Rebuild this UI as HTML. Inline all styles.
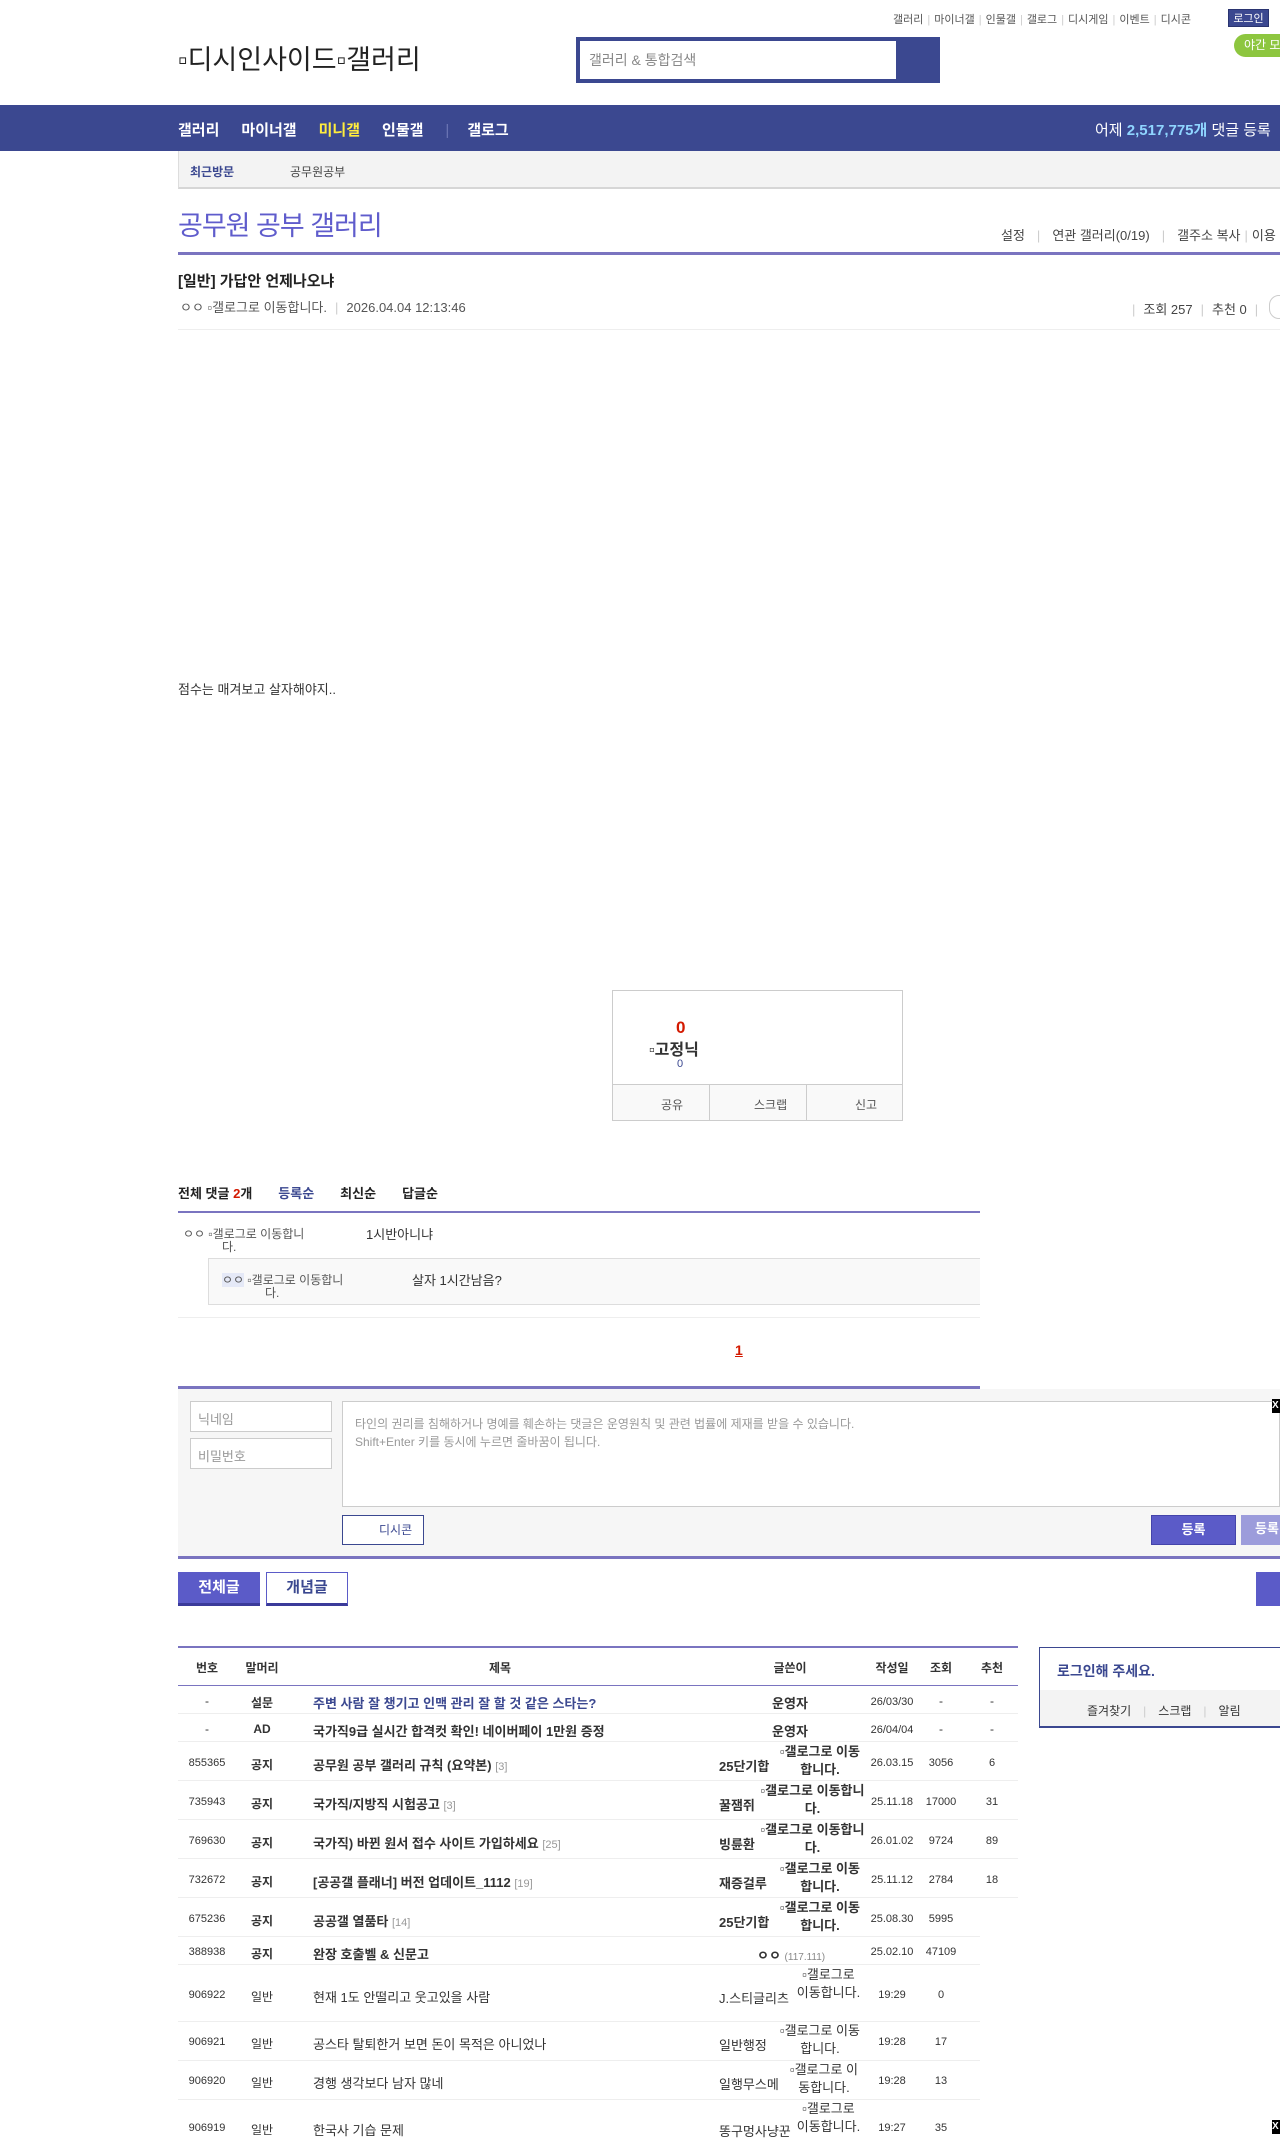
<!DOCTYPE html>
<html><head><meta charset="utf-8"><style>
*{margin:0;padding:0;box-sizing:border-box}
body{width:1280px;height:2134px;overflow:hidden;position:relative;background:#fff;font-family:"Liberation Sans","Noto Sans CJK KR",sans-serif;color:#333;font-size:13px}
.a{position:absolute;white-space:nowrap}
.navy{background:#3b4890}
.sep{color:#ccc;margin:0 4px}
.tl{font-size:11px;color:#555}
.c{position:absolute;text-align:center;font-size:12px}
.s{padding-top:1px}
</style></head><body>
<div class="a tl" style="left:893px;top:11px">갤러리<span class="sep">|</span>마이너갤<span class="sep">|</span>인물갤<span class="sep">|</span>갤로그<span class="sep">|</span>디시게임<span class="sep">|</span>이벤트<span class="sep">|</span>디시콘</div>
<div class="a navy" style="left:1228px;top:9px;width:41px;height:18px;color:#fff;font-size:11px;text-align:center;line-height:18px;border:1px solid #2a3470">로그인</div>
<div class="a" style="left:1234px;top:34px;width:60px;height:23px;background:#8dc63f;border-radius:12px;color:#fff;font-size:12px;line-height:23px;padding-left:10px">야간 모드</div>
<div class="a" style="left:178px;top:38px;font-size:27px;color:#222">▫디시인사이드▫갤러리</div>
<div class="a navy" style="left:576px;top:37px;width:364px;height:46px"></div>
<div class="a" style="left:580px;top:41px;width:316px;height:38px;background:#fff;font-size:14px;color:#888;line-height:38px;padding-left:9px">갤러리 &amp; 통합검색</div>
<div class="a navy" style="left:0;top:105px;width:1280px;height:46px"></div>
<div class="a" style="left:178px;top:119px;font-size:15px;font-weight:bold;color:#fff">갤러리<span style="margin-left:22px">마이너갤</span><span style="margin-left:22px;color:#ffec3d">미니갤</span><span style="margin-left:22px">인물갤</span><span style="margin-left:22px;color:#6b75b4;font-weight:normal">|</span><span style="margin-left:18px">갤로그</span></div>
<div class="a" style="left:1095px;top:119px;font-size:15px;color:#fff">어제 <b style="color:#8fd5ff">2,517,775개</b> 댓글 등록</div>
<div class="a" style="left:178px;top:151px;width:1102px;height:38px;background:#f3f3f3;border-left:1px solid #ddd;border-bottom:2px solid #d6d6d6"></div>
<div class="a" style="left:190px;top:163px;font-size:12px;font-weight:bold;color:#3b4890">최근방문</div>
<div class="a" style="left:290px;top:163px;font-size:12px;color:#444">공무원공부</div>
<div class="a" style="left:178px;top:204px;font-size:27px;color:#5f5ccc;letter-spacing:-1px">공무원 공부 갤러리</div>
<div class="a" style="left:1001px;top:225px;font-size:13px;color:#444">설정<span class="sep" style="margin:0 12px">|</span>연관 갤러리(0/19)<span class="sep" style="margin:0 12px">|</span>갤주소 복사<span class="sep">|</span>이용</div>
<div class="a" style="left:178px;top:252px;width:1102px;height:3px;background:#7a74c0"></div>
<div class="a" style="left:178px;top:270px;font-size:15px;font-weight:bold;color:#222">[일반] 가답안 언제나오냐</div>
<div class="a" style="left:180px;top:297px;font-size:13px;color:#555">ㅇㅇ ▫갤로그로 이동합니다.<span class="sep" style="margin:0 8px">|</span>2026.04.04 12:13:46</div>
<div class="a" style="left:1128px;top:299px;font-size:13px;color:#444"><span class="sep" style="margin-right:8px">|</span>조회 257<span class="sep" style="margin:0 8px">|</span>추천 0<span class="sep" style="margin:0 8px">|</span></div>
<div class="a" style="left:1269px;top:295px;width:20px;height:24px;border:1px solid #ccc;border-radius:12px"></div>
<div class="a" style="left:178px;top:329px;width:1102px;height:1px;background:#eee"></div>
<div class="a" style="left:178px;top:679px;font-size:13px;color:#333">점수는 매겨보고 살자해야지..</div>
<div class="a" style="left:612px;top:990px;width:291px;height:131px;border:1px solid #ccc"></div>
<div class="a" style="left:613px;top:1084px;width:289px;height:36px;background:#f9f9f9;border-top:1px solid #ccc"></div>
<div class="a" style="left:709px;top:1085px;width:1px;height:35px;background:#ccc"></div>
<div class="a" style="left:806px;top:1085px;width:1px;height:35px;background:#ccc"></div>
<div class="a" style="left:676px;top:1018px;font-size:17px;font-weight:bold;color:#d31900">0</div>
<div class="a" style="left:649px;top:1036px;font-size:16px;font-weight:bold;color:#333">▫고정닉</div>
<div class="a" style="left:677px;top:1058px;font-size:11px;color:#3b4890">0</div>
<div class="a" style="left:661px;top:1096px;font-size:12px;color:#555">공유</div>
<div class="a" style="left:754px;top:1096px;font-size:12px;color:#555">스크랩</div>
<div class="a" style="left:855px;top:1096px;font-size:12px;color:#555">신고</div>
<div class="a" style="left:178px;top:1183px;font-size:13px;font-weight:bold;color:#222">전체 댓글 <span style="color:#d31900">2</span>개<span style="margin-left:26px;color:#3b4890">등록순</span><span style="margin-left:26px">최신순</span><span style="margin-left:26px">답글순</span></div>
<div class="a" style="left:178px;top:1211px;width:802px;height:2px;background:#7a74c0"></div>
<div class="a" style="left:183px;top:1225px;font-size:12px;color:#555">ㅇㅇ ▫갤로그로 이동합니</div>
<div class="a" style="left:222px;top:1238px;font-size:12px;color:#555">다.</div>
<div class="a" style="left:366px;top:1224px;font-size:13px;color:#333">1시반아니냐</div>
<div class="a" style="left:208px;top:1258px;width:772px;height:47px;background:#f9f9f9;border:1px solid #ddd;border-right:none"></div>
<div class="a" style="left:222px;top:1271px;font-size:12px;color:#555"><span style="background:#e5e9f7">ㅇㅇ</span> ▫갤로그로 이동합니</div>
<div class="a" style="left:265px;top:1284px;font-size:12px;color:#555">다.</div>
<div class="a" style="left:412px;top:1270px;font-size:13px;color:#333">살자 1시간남음?</div>
<div class="a" style="left:178px;top:1317px;width:802px;height:1px;background:#eee"></div>
<div class="a" style="left:735px;top:1342px;font-size:14px;font-weight:bold;color:#d31900;text-decoration:underline">1</div>
<div class="a" style="left:178px;top:1386px;width:802px;height:3px;background:#7a74c0"></div>
<div class="a" style="left:178px;top:1389px;width:1102px;height:168px;background:#f6f6f6"></div>
<div class="a" style="left:190px;top:1401px;width:142px;height:31px;background:#fff;border:1px solid #ccc;font-size:13px;color:#999;padding:7px 7px">닉네임</div>
<div class="a" style="left:190px;top:1438px;width:142px;height:31px;background:#fff;border:1px solid #ccc;font-size:13px;color:#999;padding:7px 7px">비밀번호</div>
<div class="a" style="left:342px;top:1401px;width:938px;height:106px;background:#fff;border:1px solid #ccc;font-size:12px;color:#999;padding:13px 12px;line-height:18px;white-space:normal">타인의 권리를 침해하거나 명예를 훼손하는 댓글은 운영원칙 및 관련 법률에 제재를 받을 수 있습니다.<br>Shift+Enter 키를 동시에 누르면 줄바꿈이 됩니다.</div>
<div class="a" style="left:342px;top:1515px;width:82px;height:30px;background:#fff;border:1px solid #3b4890;font-size:12px;color:#3b4890;line-height:28px;padding-left:36px">디시콘</div>
<div class="a" style="left:1151px;top:1515px;width:85px;height:30px;background:#5b5bc8;border:1px solid #4444aa;color:#fff;font-size:13px;font-weight:bold;text-align:center;line-height:28px">등록</div>
<div class="a" style="left:1241px;top:1515px;width:50px;height:30px;background:#9c9cdb;color:#fff;font-size:13px;font-weight:bold;line-height:28px;padding-left:14px">등록</div>
<div class="a" style="left:1272px;top:1399px;width:8px;height:14px;background:#000;color:#fff;font-size:10px;font-weight:bold;line-height:14px">X</div>
<div class="a" style="left:178px;top:1556px;width:1102px;height:3px;background:#7a74c0"></div>
<div class="a" style="left:178px;top:1572px;width:82px;height:34px;background:#5b5bc8;border-bottom:3px solid #3b3b9a;color:#fff;font-size:15px;font-weight:bold;text-align:center;line-height:32px">전체글</div>
<div class="a" style="left:266px;top:1572px;width:82px;height:34px;background:#fff;border:1px solid #5b5bc8;border-bottom:3px solid #3b3b9a;color:#3b4890;font-size:15px;font-weight:bold;text-align:center;line-height:30px">개념글</div>
<div class="a" style="left:1256px;top:1572px;width:30px;height:34px;background:#5b5bc8"></div>
<div class="a" style="left:178px;top:1646px;width:840px;height:2px;background:#7a74c0"></div>
<div class="a" style="left:178px;top:1685px;width:840px;height:1px;background:#7a74c0"></div>
<div class="c" style="left:187px;top:1659px;width:40px;font-weight:bold">번호</div>
<div class="c" style="left:242px;top:1659px;width:40px;font-weight:bold">말머리</div>
<div class="c" style="left:480px;top:1659px;width:40px;font-weight:bold">제목</div>
<div class="c" style="left:765px;top:1659px;width:50px;font-weight:bold">글쓴이</div>
<div class="c" style="left:867px;top:1659px;width:50px;font-weight:bold">작성일</div>
<div class="c" style="left:921px;top:1659px;width:40px;font-weight:bold">조회</div>
<div class="c" style="left:972px;top:1659px;width:40px;font-weight:bold">추천</div>
<div class="a" style="left:178px;top:1713px;width:840px;height:1px;background:#eee"></div>
<div class="a" style="left:178px;top:1741px;width:840px;height:1px;background:#eee"></div>
<div class="a" style="left:178px;top:1780px;width:840px;height:1px;background:#eee"></div>
<div class="a" style="left:178px;top:1819px;width:840px;height:1px;background:#eee"></div>
<div class="a" style="left:178px;top:1858px;width:840px;height:1px;background:#eee"></div>
<div class="a" style="left:178px;top:1897px;width:840px;height:1px;background:#eee"></div>
<div class="a" style="left:178px;top:1936px;width:802px;height:1px;background:#eee"></div>
<div class="a" style="left:178px;top:1964px;width:802px;height:1px;background:#eee"></div>
<div class="a" style="left:178px;top:2021px;width:802px;height:1px;background:#eee"></div>
<div class="a" style="left:178px;top:2060px;width:802px;height:1px;background:#eee"></div>
<div class="a" style="left:178px;top:2099px;width:802px;height:1px;background:#eee"></div>

<div class="c" style="left:187px;top:1694px;width:40px">-</div><div class="c" style="left:242px;top:1694px;width:40px;font-weight:bold">설문</div><div class="a" style="left:313px;top:1693px;font-size:13px;font-weight:bold;color:#3b4890">주변 사람 잘 챙기고 인맥 관리 잘 할 것 같은 스타는?</div><div class="c" style="left:760px;top:1693px;width:60px;font-weight:bold;font-size:13px">운영자</div><div class="c" style="left:867px;top:1696px;width:50px;font-size:11px">26/03/30</div><div class="c" style="left:921px;top:1694px;width:40px">-</div><div class="c" style="left:972px;top:1694px;width:40px">-</div>

<div class="c" style="left:187px;top:1722px;width:40px">-</div><div class="c" style="left:242px;top:1722px;width:40px;font-weight:bold">AD</div><div class="a" style="left:313px;top:1721px;font-size:13px;font-weight:bold;color:#333">국가직9급 실시간 합격컷 확인! 네이버페이 1만원 증정</div><div class="c" style="left:760px;top:1721px;width:60px;font-weight:bold;font-size:13px">운영자</div><div class="c" style="left:867px;top:1724px;width:50px;font-size:11px">26/04/04</div><div class="c" style="left:921px;top:1722px;width:40px">-</div><div class="c" style="left:972px;top:1722px;width:40px">-</div>

<div class="c s" style="left:182px;top:1756px;width:50px;font-size:11px">855365</div><div class="c" style="left:242px;top:1756px;width:40px;font-weight:bold">공지</div><div class="a" style="left:313px;top:1755px;font-size:13px;font-weight:bold">공무원 공부 갤러리 규칙 (요약본) <span style="color:#999;font-weight:normal;font-size:11px">[3]</span></div><div class="a" style="left:719px;top:1756px;font-size:13px;font-weight:bold">25단기합</div><div class="a" style="left:775px;top:1743px;font-size:13px;font-weight:bold;line-height:18px;text-align:center;white-space:normal;width:90px">▫갤로그로 이동합니다.</div><div class="c s" style="left:867px;top:1756px;width:50px;font-size:11px">26.03.15</div><div class="c s" style="left:921px;top:1756px;width:40px;font-size:11px">3056</div><div class="c s" style="left:972px;top:1756px;width:40px;font-size:11px">6</div>

<div class="c s" style="left:182px;top:1795px;width:50px;font-size:11px">735943</div><div class="c" style="left:242px;top:1795px;width:40px;font-weight:bold">공지</div><div class="a" style="left:313px;top:1794px;font-size:13px;font-weight:bold">국가직/지방직 시험공고 <span style="color:#999;font-weight:normal;font-size:11px">[3]</span></div><div class="a" style="left:719px;top:1795px;font-size:13px;font-weight:bold">꿀잼쥐</div><div class="a" style="left:760px;top:1782px;font-size:13px;font-weight:bold;line-height:18px;text-align:center;white-space:normal;width:105px">▫갤로그로 이동합니다.</div><div class="c s" style="left:867px;top:1795px;width:50px;font-size:11px">25.11.18</div><div class="c s" style="left:921px;top:1795px;width:40px;font-size:11px">17000</div><div class="c s" style="left:972px;top:1795px;width:40px;font-size:11px">31</div>

<div class="c s" style="left:182px;top:1834px;width:50px;font-size:11px">769630</div><div class="c" style="left:242px;top:1834px;width:40px;font-weight:bold">공지</div><div class="a" style="left:313px;top:1833px;font-size:13px;font-weight:bold">국가직) 바뀐 원서 접수 사이트 가입하세요 <span style="color:#999;font-weight:normal;font-size:11px">[25]</span></div><div class="a" style="left:719px;top:1834px;font-size:13px;font-weight:bold">빙륜환</div><div class="a" style="left:760px;top:1821px;font-size:13px;font-weight:bold;line-height:18px;text-align:center;white-space:normal;width:105px">▫갤로그로 이동합니다.</div><div class="c s" style="left:867px;top:1834px;width:50px;font-size:11px">26.01.02</div><div class="c s" style="left:921px;top:1834px;width:40px;font-size:11px">9724</div><div class="c s" style="left:972px;top:1834px;width:40px;font-size:11px">89</div>

<div class="c s" style="left:182px;top:1873px;width:50px;font-size:11px">732672</div><div class="c" style="left:242px;top:1873px;width:40px;font-weight:bold">공지</div><div class="a" style="left:313px;top:1872px;font-size:13px;font-weight:bold">[공공갤 플래너] 버전 업데이트_1112 <span style="color:#999;font-weight:normal;font-size:11px">[19]</span></div><div class="a" style="left:719px;top:1873px;font-size:13px;font-weight:bold">재증걸루</div><div class="a" style="left:775px;top:1860px;font-size:13px;font-weight:bold;line-height:18px;text-align:center;white-space:normal;width:90px">▫갤로그로 이동합니다.</div><div class="c s" style="left:867px;top:1873px;width:50px;font-size:11px">25.11.12</div><div class="c s" style="left:921px;top:1873px;width:40px;font-size:11px">2784</div><div class="c s" style="left:972px;top:1873px;width:40px;font-size:11px">18</div>

<div class="c s" style="left:182px;top:1912px;width:50px;font-size:11px">675236</div><div class="c" style="left:242px;top:1912px;width:40px;font-weight:bold">공지</div><div class="a" style="left:313px;top:1911px;font-size:13px;font-weight:bold">공공갤 열품타 <span style="color:#999;font-weight:normal;font-size:11px">[14]</span></div><div class="a" style="left:719px;top:1912px;font-size:13px;font-weight:bold">25단기합</div><div class="a" style="left:775px;top:1899px;font-size:13px;font-weight:bold;line-height:18px;text-align:center;white-space:normal;width:90px">▫갤로그로 이동합니다.</div><div class="c s" style="left:867px;top:1912px;width:50px;font-size:11px">25.08.30</div><div class="c s" style="left:921px;top:1912px;width:40px;font-size:11px">5995</div>

<div class="c s" style="left:182px;top:1945px;width:50px;font-size:11px">388938</div><div class="c" style="left:242px;top:1945px;width:40px;font-weight:bold">공지</div><div class="a" style="left:313px;top:1944px;font-size:13px;font-weight:bold">완장 호출벨 &amp; 신문고</div><div class="a" style="left:757px;top:1945px;font-size:13px;font-weight:bold">ㅇㅇ <span style="font-size:10px;color:#888;font-weight:normal">(117.111)</span></div><div class="c s" style="left:867px;top:1945px;width:50px;font-size:11px">25.02.10</div><div class="c s" style="left:921px;top:1945px;width:40px;font-size:11px">47109</div>

<div class="c s" style="left:182px;top:1988px;width:50px;font-size:11px">906922</div><div class="c" style="left:242px;top:1988px;width:40px">일반</div><div class="a" style="left:313px;top:1987px;font-size:13px">현재 1도 안떨리고 웃고있을 사람</div><div class="a" style="left:719px;top:1988px;font-size:13px">J.스티글리츠</div><div class="a" style="left:796px;top:1966px;font-size:13px;line-height:18px;text-align:center;white-space:normal;width:65px">▫갤로그로 이동합니다.</div><div class="c s" style="left:867px;top:1988px;width:50px;font-size:11px">19:29</div><div class="c s" style="left:921px;top:1988px;width:40px;font-size:11px">0</div>

<div class="c s" style="left:182px;top:2035px;width:50px;font-size:11px">906921</div><div class="c" style="left:242px;top:2035px;width:40px">일반</div><div class="a" style="left:313px;top:2034px;font-size:13px">공스타 탈퇴한거 보면 돈이 목적은 아니었나</div><div class="a" style="left:719px;top:2035px;font-size:13px">일반행정</div><div class="a" style="left:775px;top:2022px;font-size:13px;line-height:18px;text-align:center;white-space:normal;width:90px">▫갤로그로 이동합니다.</div><div class="c s" style="left:867px;top:2035px;width:50px;font-size:11px">19:28</div><div class="c s" style="left:921px;top:2035px;width:40px;font-size:11px">17</div>

<div class="c s" style="left:182px;top:2074px;width:50px;font-size:11px">906920</div><div class="c" style="left:242px;top:2074px;width:40px">일반</div><div class="a" style="left:313px;top:2073px;font-size:13px">경행 생각보다 남자 많네</div><div class="a" style="left:719px;top:2074px;font-size:13px">일행무스메</div><div class="a" style="left:785px;top:2061px;font-size:13px;line-height:18px;text-align:center;white-space:normal;width:78px">▫갤로그로 이동합니다.</div><div class="c s" style="left:867px;top:2074px;width:50px;font-size:11px">19:28</div><div class="c s" style="left:921px;top:2074px;width:40px;font-size:11px">13</div>

<div class="c s" style="left:182px;top:2121px;width:50px;font-size:11px">906919</div><div class="c" style="left:242px;top:2121px;width:40px">일반</div><div class="a" style="left:313px;top:2120px;font-size:13px">한국사 기습 문제</div><div class="a" style="left:719px;top:2121px;font-size:13px">똥구멍사냥꾼</div><div class="a" style="left:796px;top:2100px;font-size:13px;line-height:18px;text-align:center;white-space:normal;width:65px">▫갤로그로 이동합니다.</div><div class="c s" style="left:867px;top:2121px;width:50px;font-size:11px">19:27</div><div class="c s" style="left:921px;top:2121px;width:40px;font-size:11px">35</div>

<div class="a" style="left:1039px;top:1647px;width:250px;height:81px;border:1px solid #3b4890;border-right:none;border-bottom:2px solid #3b4890"></div>
<div class="a" style="left:1040px;top:1690px;width:240px;height:36px;background:#f3f3f3"></div>
<div class="a" style="left:1057px;top:1661px;font-size:14px;font-weight:bold;color:#3b4890">로그인해 주세요.</div>
<div class="a" style="left:1087px;top:1702px;font-size:12px;color:#333">즐겨찾기<span class="sep" style="margin:0 12px">|</span>스크랩<span class="sep" style="margin:0 12px">|</span>알림</div>
<div class="a" style="left:1272px;top:2120px;width:8px;height:14px;background:#000;color:#fff;font-size:10px;font-weight:bold;line-height:14px">X</div>
</body></html>
